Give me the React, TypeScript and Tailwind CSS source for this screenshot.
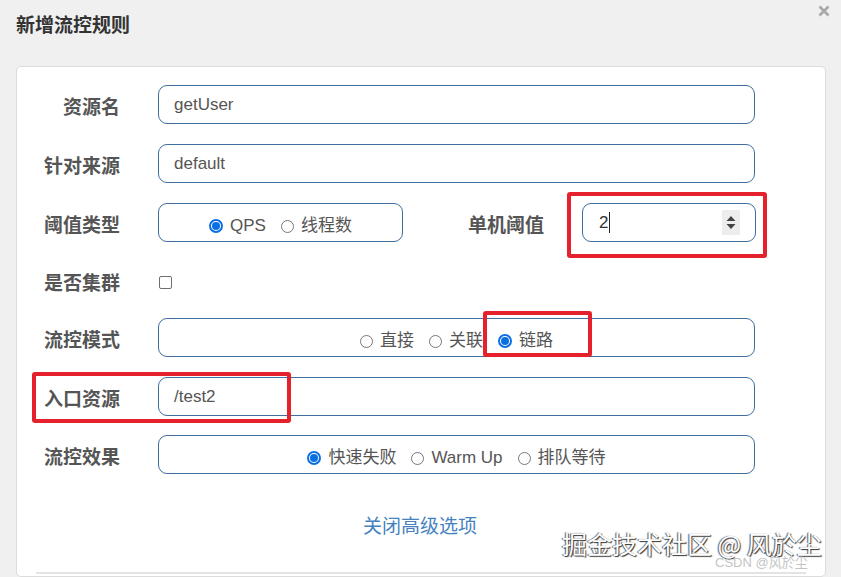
import React from "react";

const labelCls =
  "shrink-0 text-right font-bold text-[19px] leading-[26px] text-[#555] pt-[7px]";
const boxCls =
  "h-[39px] rounded-[9px] border border-[#3f6f9f] bg-white flex items-center";

function Radio({ checked }: { checked?: boolean }) {
  if (checked) {
    return (
      <span className="w-[14px] h-[14px] rounded-full border-2 border-[#0b6fe3] flex items-center justify-center bg-white">
        <span className="w-[8px] h-[8px] rounded-full bg-[#0b6fe3]" />
      </span>
    );
  }
  return <span className="w-[13px] h-[13px] rounded-full border border-[#777] bg-white" />;
}

function RadioGroup({ options }: { options: { text: string; checked?: boolean }[] }) {
  return (
    <div className="flex items-center justify-center w-full gap-[15px] pt-[7px]">
      {options.map((o) => (
        <label key={o.text} className="flex items-center gap-[7px] text-[17px] leading-[24px] text-[#555]">
          <Radio checked={o.checked} />
          <span>{o.text}</span>
        </label>
      ))}
    </div>
  );
}

function Row({ label, children, className = "" }: { label: string; children: React.ReactNode; className?: string }) {
  return (
    <div className={`flex items-center ${className}`}>
      <div className={`${labelCls} w-[103px]`}>{label}</div>
      <div className="ml-[38px] flex items-center">{children}</div>
    </div>
  );
}

function TextBox({ value }: { value: string }) {
  return (
    <div className={`${boxCls} w-[597px] px-[15px] text-[17px] text-[#555]`}>{value}</div>
  );
}

export default function App() {
  return (
    <div className="relative w-[841px] h-[577px] overflow-hidden bg-[#f0f0f0] flex flex-col font-['Liberation_Sans','Noto_Sans_CJK_SC',sans-serif]">
      <div className="h-[66px] shrink-0 flex items-start justify-between pl-[16px] pr-[11px]">
        <h1 className="mt-[13px] text-[19px] leading-[26px] font-bold text-[#333]">新增流控规则</h1>
        <svg width="12" height="12" viewBox="0 0 12 12" className="mt-[5px]">
          <path d="M1.5 1.5 L10.5 10.5 M10.5 1.5 L1.5 10.5" stroke="#a8a8a8" strokeWidth="2.6" />
        </svg>
      </div>

      <div className="flex-1 ml-[16px] mr-[15px] bg-white border border-[#dcdcdc] rounded-[5px] pt-[18px] flex flex-col">
        <Row label="资源名" className="mb-[20px]">
          <TextBox value="getUser" />
        </Row>
        <Row label="针对来源" className="mb-[20px]">
          <TextBox value="default" />
        </Row>
        <Row label="阈值类型" className="mb-[20px]">
          <div className={`${boxCls} w-[245px]`}>
            <RadioGroup options={[{ text: "QPS", checked: true }, { text: "线程数" }]} />
          </div>
          <div className={`${labelCls} w-[141px]`}>单机阈值</div>
          <div className={`${boxCls} ml-[38px] w-[174px] pl-[16px] pr-[15px] justify-between text-[17px] text-[#333]`}>
            <span className="flex items-center">
              2<span className="ml-[1px] w-[1px] h-[21px] bg-[#222]" />
            </span>
            <span className="w-[18px] h-[25px] bg-[#ededed] flex items-center justify-center">
              <svg width="10" height="15" viewBox="0 0 10 15">
                <path d="M5 1 L9.5 6 L0.5 6 Z M0.5 9 L9.5 9 L5 14 Z" fill="#444" />
              </svg>
            </span>
          </div>
        </Row>
        <Row label="是否集群" className="h-[36px] mb-[20px]">
          <span className="ml-[1px] mt-[5px] w-[13px] h-[13px] rounded-[2px] border border-[#6f6f6f] bg-white" />
        </Row>
        <Row label="流控模式" className="mb-[20px]">
          <div className={`${boxCls} w-[597px]`}>
            <RadioGroup options={[{ text: "直接" }, { text: "关联" }, { text: "链路", checked: true }]} />
          </div>
        </Row>
        <Row label="入口资源" className="mb-[19px]">
          <TextBox value="/test2" />
        </Row>
        <Row label="流控效果">
          <div className={`${boxCls} w-[597px]`}>
            <RadioGroup
              options={[{ text: "快速失败", checked: true }, { text: "Warm Up" }, { text: "排队等待" }]}
            />
          </div>
        </Row>

        <div className="mt-[40px] text-center pr-[2px]">
          <a className="text-[19px] leading-[26px] text-[#4582c0] cursor-pointer">关闭高级选项</a>
        </div>
        <div className="mt-[32px] mx-[19px] border-t-2 border-[#e3e3e3]" />
      </div>

      {/* annotation boxes */}
      <div className="absolute left-[567px] top-[192px] w-[200px] h-[66px] border-[4px] border-[#e5212b] rounded-[3px]" />
      <div className="absolute left-[483px] top-[311px] w-[109px] h-[46px] border-[4px] border-[#e5212b] rounded-[3px]" />
      <div className="absolute left-[32px] top-[372px] w-[259px] h-[51px] border-[4px] border-[#e5212b] rounded-[3px]" />

      {/* watermarks */}
      <div className="absolute left-[562px] top-[528px] text-[25px] leading-[30px] text-white font-['Noto_Sans_CJK_SC',sans-serif] [text-shadow:1px_1px_1px_#333,-1px_0_1px_#555]">
        掘金技术社区 @ 风於尘
      </div>
      <div className="absolute left-[715px] top-[555px] text-[13px] leading-[16px] text-[#c4c4c4] font-['Liberation_Sans','Noto_Sans_CJK_SC',sans-serif]">
        CSDN @风於尘
      </div>
    </div>
  );
}
